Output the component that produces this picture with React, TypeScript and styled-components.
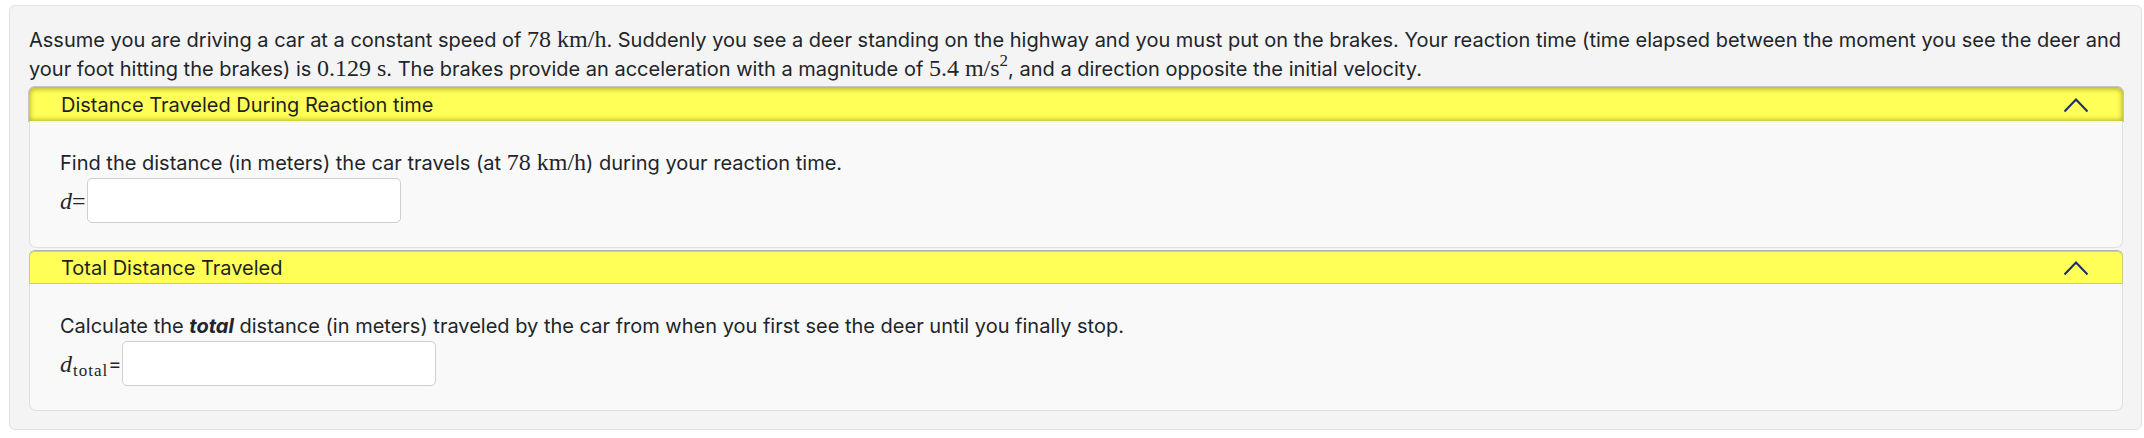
import React from "react";
import styled, { createGlobalStyle } from "styled-components";

const GlobalStyle = createGlobalStyle`
    body {
        margin: 0;
        background: #ffffff;
        font-family: Inter, "Noto Sans", sans-serif;
        color: #212529;
    }
`;

const StyledCard = styled.div`
    margin: 5px 2px 0 9px;
    padding: 20px 18px 18px 19px;
    background: #f4f4f4;
    border: 1px solid #e2e2e2;
    border-radius: 6px;
`;
StyledCard.displayName = "StyledCard";

const StyledPrompt = styled.p`
    margin: 0 0 3px 0;
    font-size: 20px;
    line-height: 29px;
    white-space: nowrap;
`;
StyledPrompt.displayName = "StyledPrompt";

const StyledMath = styled.span<{ $italic?: boolean }>`
    font-family: "Liberation Serif", "DejaVu Serif", serif;
    font-size: 24px;
    line-height: 1;
    font-style: ${(p) => (p.$italic ? "italic" : "normal")};
    sub {
        font-size: 17px;
        font-style: normal;
        letter-spacing: 1px;
        margin-left: 1px;
        vertical-align: -4px;
        line-height: 0;
    }
    sup {
        font-size: 17px;
        vertical-align: 10px;
        line-height: 0;
    }
`;
StyledMath.displayName = "StyledMath";

const StyledSection = styled.div`
    margin-bottom: 2px;
    &:last-child {
        margin-bottom: 0;
    }
`;
StyledSection.displayName = "StyledSection";

const StyledHeader = styled.div<{ $focused?: boolean }>`
    display: flex;
    align-items: center;
    justify-content: space-between;
    height: 33px;
    padding: 0 34px 0 32px;
    background: #ffff58;
    border-top: 1px solid #b4b4b4;
    border-radius: 6px 6px 0 0;
    box-shadow: ${(p) =>
        p.$focused
            ? "inset 0 0 5px 1px rgba(110, 110, 0, 0.55), 0 0 0 1px rgba(150, 150, 150, 0.5)"
            : "inset 0 0 0 1px rgba(170, 170, 170, 0.6)"};
    font-size: 20px;
    color: #1f1f1f;
    svg {
        display: block;
    }
`;
StyledHeader.displayName = "StyledHeader";

const StyledBody = styled.div`
    padding: 28px 30px 24px 30px;
    background: #f9f9f9;
    border: 1px solid #dcdfe4;
    border-top: none;
    border-radius: 0 0 7px 7px;
`;
StyledBody.displayName = "StyledBody";

const StyledQuestion = styled.p`
    margin: 0;
    font-size: 20px;
    line-height: 29px;
`;
StyledQuestion.displayName = "StyledQuestion";

const StyledAnswerRow = styled.div`
    display: flex;
    align-items: center;
    font-size: 20px;
`;
StyledAnswerRow.displayName = "StyledAnswerRow";

const StyledInput = styled.input`
    box-sizing: border-box;
    width: 314px;
    height: 45px;
    margin-left: 1px;
    background: #ffffff;
    border: 1px solid #cfcfcf;
    border-radius: 5px;
`;
StyledInput.displayName = "StyledInput";

const Chevron = () => (
    <svg width="26" height="16" viewBox="0 0 26 16">
        <polyline points="1.5,14.5 13,2.5 24.5,14.5" fill="none" stroke="#1b2c6e" strokeWidth="2" />
    </svg>
);

interface PartProps {
    title: string
    focused?: boolean
    children: React.ReactNode
}

const Part = ({ title, focused, children }: PartProps) => (
    <StyledSection>
        <StyledHeader $focused={focused}>
            <span>{title}</span>
            <Chevron />
        </StyledHeader>
        <StyledBody>{children}</StyledBody>
    </StyledSection>
);

export default function App() {
    return (
        <>
            <GlobalStyle />
            <StyledCard>
                <StyledPrompt>
                    Assume you are driving a car at a constant speed of <StyledMath>78 km/h</StyledMath>. Suddenly you see a
                    deer standing on the highway and you must put on the brakes. Your reaction time (time elapsed between
                    the moment you see the deer and
                    <br />
                    your foot hitting the brakes) is <StyledMath>0.129 s</StyledMath>. The brakes provide an acceleration
                    with a magnitude of <StyledMath>5.4 m/s<sup>2</sup></StyledMath>, and a direction opposite the initial
                    velocity.
                </StyledPrompt>
                <Part title="Distance Traveled During Reaction time" focused>
                    <StyledQuestion>
                        Find the distance (in meters) the car travels (at <StyledMath>78 km/h</StyledMath>) during your
                        reaction time.
                    </StyledQuestion>
                    <StyledAnswerRow>
                        <StyledMath $italic>d</StyledMath>
                        <StyledMath>=</StyledMath>
                        <StyledInput type="text" />
                    </StyledAnswerRow>
                </Part>
                <Part title="Total Distance Traveled">
                    <StyledQuestion>
                        Calculate the <b><i>total</i></b> distance (in meters) traveled by the car from when you first see
                        the deer until you finally stop.
                    </StyledQuestion>
                    <StyledAnswerRow>
                        <StyledMath $italic>
                            d<sub>total</sub>
                        </StyledMath>
                        <span>=</span>
                        <StyledInput type="text" />
                    </StyledAnswerRow>
                </Part>
            </StyledCard>
        </>
    );
}
